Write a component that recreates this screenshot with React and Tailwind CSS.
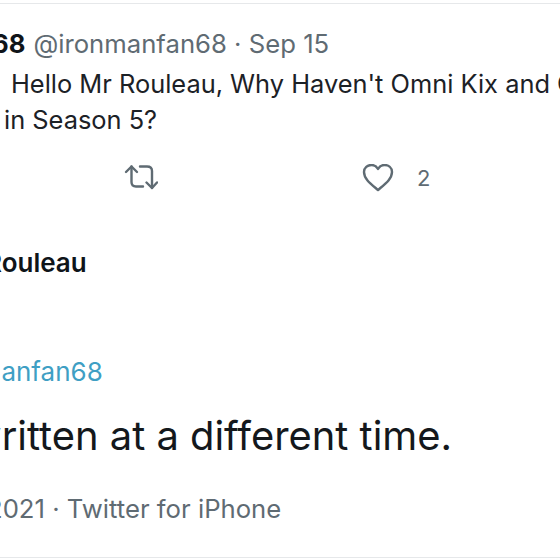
const FONT = "font-['Inter','Liberation_Sans',sans-serif]";

function RetweetIcon() {
  return (
    <svg width="34" height="28" viewBox="0 0 34 28" fill="none" stroke="#5f6b73" strokeWidth="2.4" strokeLinecap="round" strokeLinejoin="round">
      <path d="M2 8 L7.5 2.5 L13 8" />
      <path d="M7.5 2.5 V18 Q7.5 22.5 12 22.5 H19" />
      <path d="M16 2.5 H23 Q28 2.5 28 7 V24" />
      <path d="M22.5 18.5 L28 24 L33 18.5" />
    </svg>
  );
}

function HeartIcon() {
  return (
    <svg width="32" height="28" viewBox="0 0 32 28" fill="none" stroke="#5f6b73" strokeWidth="2.4" strokeLinejoin="round">
      <path d="M16 26 C9 20 2 15 2 8 C2 3.5 5.5 1 9.5 1 C12.2 1 14.6 2.4 16 5 C17.4 2.4 19.8 1 22.5 1 C26.5 1 30 3.5 30 8 C30 15 23 20 16 26 Z" />
    </svg>
  );
}

export default function App() {
  return (
    <div className={`${FONT} h-[560px] w-[560px] overflow-hidden bg-white flex flex-col`}>
      <div className="mt-[3px] h-px bg-[#e6e8ea]" />

      <div className="mt-[26px] flex items-baseline whitespace-nowrap text-[25.7px] leading-[28px] text-[#5f6b73] ml-[-8px]">
        <span className="font-bold text-[#0f1419]">68</span>
        <span className="ml-2">@ironmanfan68 · Sep 15</span>
      </div>

      <p className="mt-[8px] ml-[11px] whitespace-nowrap text-[25.4px] leading-[36px] text-[#1c2126]">
        Hello Mr Rouleau, Why Haven't Omni Kix and Gem
      </p>
      <p className="ml-[4px] whitespace-nowrap text-[25.4px] leading-[36px] text-[#1c2126]">in Season 5?</p>

      <div className="mt-[25px] flex items-center h-[30px]">
        <div className="ml-[124px]"><RetweetIcon /></div>
        <div className="ml-[204px]"><HeartIcon /></div>
        <span className="ml-[23px] text-[22px] text-[#5f6b73]">2</span>
      </div>

      <p className="mt-[55px] ml-[-15px] whitespace-nowrap text-[26px] leading-[30px] font-semibold text-[#0f1419]">Rouleau</p>

      <p className="mt-[79px] ml-[-68px] whitespace-nowrap text-[26px] leading-[30px] text-[#3f9fc4]">ironmanfan68</p>

      <p className="mt-[25px] ml-[-31px] whitespace-nowrap text-[39.9px] leading-[48px] text-[#14181c]">written at a different time.</p>

      <p className="mt-[34px] ml-[-13px] whitespace-nowrap text-[25.7px] leading-[30px] text-[#5f6b73]">2021 · Twitter for iPhone</p>

      <div className="mt-auto mb-[2px] h-px bg-[#e6e8ea]" />
    </div>
  );
}
